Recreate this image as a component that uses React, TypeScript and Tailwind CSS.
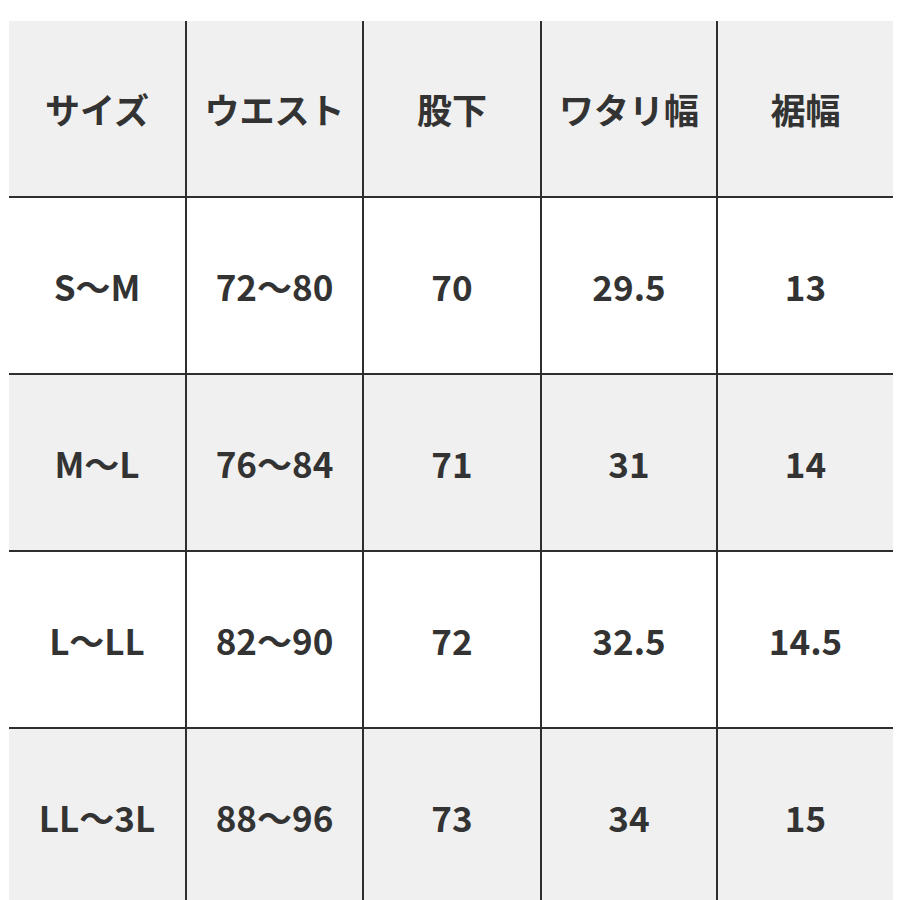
const header = ["サイズ", "ウエスト", "股下", "ワタリ幅", "裾幅"];

const rows: string[][] = [
  ["S～M", "72～80", "70", "29.5", "13"],
  ["M～L", "76～84", "71", "31", "14"],
  ["L～LL", "82～90", "72", "32.5", "14.5"],
  ["LL～3L", "88～96", "73", "34", "15"],
];

function Cell({ text, first, top }: { text: string; first: boolean; top: boolean }) {
  return (
    <div
      className={
        "flex items-center justify-center border-[#2e2e2e] " +
        (first ? "" : "border-l-2 ") +
        (top ? "" : "border-t-2")
      }
    >
      <span className="text-[35px] font-semibold text-[#333333] leading-none">{text}</span>
    </div>
  );
}

export default function App() {
  const all = [header, ...rows];
  return (
    <div
      className="w-[900px] h-[900px] bg-white pt-[21px] pl-[9px]"
      style={{ fontFamily: '"Noto Sans CJK JP", "Noto Sans", sans-serif' }}
    >
      <div className="w-[884px] flex flex-col">
        {all.map((r, i) => (
          <div
            key={i}
            className={
              "grid grid-cols-[176px_177px_178px_176px_177px] " +
              (i === 0 ? "h-[175px] " : "h-[177px] ") +
              (i % 2 === 0 ? "bg-[#f0f0f0]" : "bg-white")
            }
          >
            {r.map((t, j) => (
              <Cell key={j} text={t} first={j === 0} top={i === 0} />
            ))}
          </div>
        ))}
      </div>
    </div>
  );
}
